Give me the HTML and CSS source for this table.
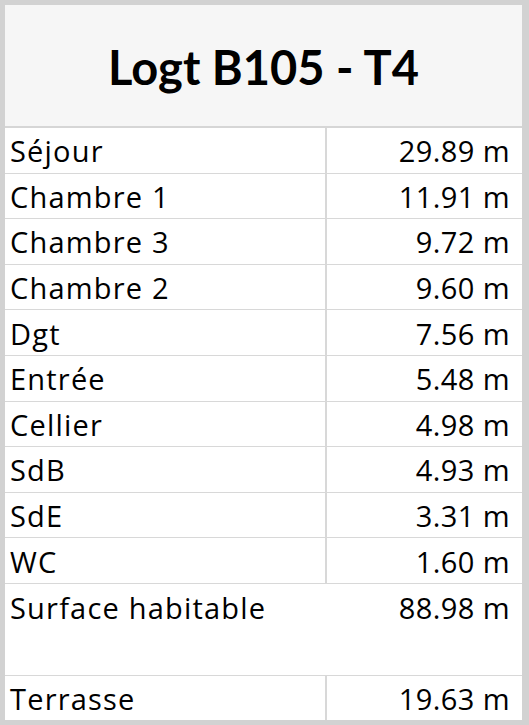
FILE: index.html
```html
<!DOCTYPE html>
<html lang="fr">
<head>
<meta charset="utf-8">
<link rel="stylesheet" href="styles.css">
</head>
<body>
<div class="card">
  <div class="title">Logt B105 - T4</div>
  <div class="rows">
    <div class="row"><div class="name">Séjour</div><div class="val">29.89 m</div></div>
    <div class="row"><div class="name">Chambre 1</div><div class="val">11.91 m</div></div>
    <div class="row"><div class="name">Chambre 3</div><div class="val">9.72 m</div></div>
    <div class="row"><div class="name">Chambre 2</div><div class="val">9.60 m</div></div>
    <div class="row"><div class="name">Dgt</div><div class="val">7.56 m</div></div>
    <div class="row"><div class="name">Entrée</div><div class="val">5.48 m</div></div>
    <div class="row"><div class="name">Cellier</div><div class="val">4.98 m</div></div>
    <div class="row"><div class="name">SdB</div><div class="val">4.93 m</div></div>
    <div class="row"><div class="name">SdE</div><div class="val">3.31 m</div></div>
    <div class="row"><div class="name">WC</div><div class="val">1.60 m</div></div>
    <div class="row total"><div class="name">Surface habitable</div><div class="val">88.98 m</div></div>
    <div class="row last"><div class="name">Terrasse</div><div class="val">19.63 m</div></div>
  </div>
</div>
</body>
</html>
```
FILE: styles.css
```css
html, body {
  margin: 0;
  padding: 0;
  background: #ffffff;
}
.card {
  box-sizing: border-box;
  width: 529px;
  height: 725px;
  border-style: solid;
  border-color: #d2d2d2;
  border-width: 5px 7px 5px 5px;
  font-family: "Open Sans", "Liberation Sans", sans-serif;
  color: #000;
  display: flex;
  flex-direction: column;
}
.title {
  box-sizing: border-box;
  height: 123px;
  padding-top: 2px;
  background: #f6f6f6;
  border-bottom: 2px solid #d6d6d6;
  display: flex;
  align-items: center;
  justify-content: center;
  font-family: "Lato", "Liberation Sans", sans-serif;
  font-weight: 700;
  font-size: 47px;
}
.rows {
  display: flex;
  flex-direction: column;
}
.row {
  display: grid;
  grid-template-columns: 322px 1fr;
  height: 45.6px;
  border-bottom: 1.5px solid #d8d8d8;
  box-sizing: border-box;
  font-size: 29px;
  line-height: 1;
}
.name {
  padding-left: 5px;
  padding-top: 1px;
  border-right: 2px solid #d8d8d8;
  display: flex;
  align-items: center;
  letter-spacing: 1.2px;
}
.val {
  padding-right: 12px;
  padding-top: 1px;
  display: flex;
  align-items: center;
  justify-content: flex-end;
  letter-spacing: 0.4px;
}
.total {
  height: 92px;
  align-items: start;
}
.total .name, .total .val {
  border-right: none;
  height: 45px;
}
.last {
  border-bottom: none;
  height: 44px;
}
```
